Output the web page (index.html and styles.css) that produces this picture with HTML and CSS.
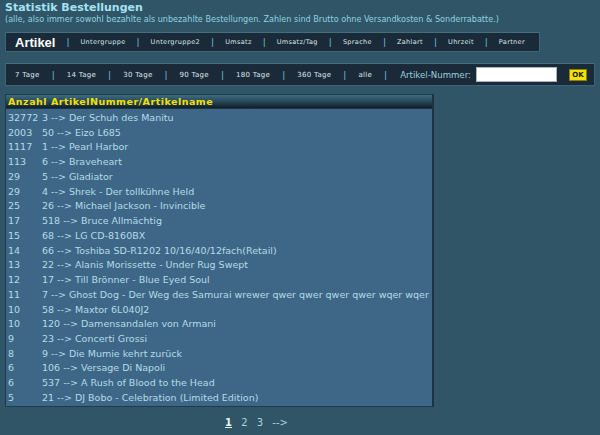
FILE: index.html
```html
<!DOCTYPE html>
<html lang="de">
<head>
    <meta charset="UTF-8">
    <title>Statistik Bestellungen</title>
    <link rel="stylesheet" href="styles.css">
</head>
<body>

    <div class="kopf">
        <h1>Statistik Bestellungen</h1>
        <p>(alle, also immer sowohl bezahlte als unbezahlte Bestellungen. Zahlen sind Brutto ohne Versandkosten &amp; Sonderrabatte.)</p>
    </div>

    <div class="menu menu-haupt">
        <a class="aktiv" href="#">Artikel</a><span class="trenner">|</span>
        <a href="#">Untergruppe</a><span class="trenner">|</span>
        <a href="#">Untergruppe2</a><span class="trenner">|</span>
        <a href="#">Umsatz</a><span class="trenner">|</span>
        <a href="#">Umsatz/Tag</a><span class="trenner">|</span>
        <a href="#">Sprache</a><span class="trenner">|</span>
        <a href="#">Zahlart</a><span class="trenner">|</span>
        <a href="#">Uhrzeit</a><span class="trenner">|</span>
        <a href="#">Partner</a>
    </div>

    <div class="menu menu-zeit">
        <a href="#">7 Tage</a><span class="trenner">|</span>
        <a href="#">14 Tage</a><span class="trenner">|</span>
        <a href="#">30 Tage</a><span class="trenner">|</span>
        <a href="#">90 Tage</a><span class="trenner">|</span>
        <a href="#">180 Tage</a><span class="trenner">|</span>
        <a href="#">360 Tage</a><span class="trenner">|</span>
        <a href="#">alle</a><span class="trenner">|</span>
        <label for="artnr">Artikel-Nummer:</label>
        <input type="text" id="artnr">
        <button type="button">OK</button>
    </div>

    <div class="tabelle">
        <div class="tabelle-kopf">Anzahl ArtikelNummer/Artikelname</div>
        <div class="tabelle-inhalt">
            <div class="zeile"><span class="spalte-anzahl">32772</span><span>3 --&gt; Der Schuh des Manitu</span></div>
            <div class="zeile"><span class="spalte-anzahl">2003</span><span>50 --&gt; Eizo L685</span></div>
            <div class="zeile"><span class="spalte-anzahl">1117</span><span>1 --&gt; Pearl Harbor</span></div>
            <div class="zeile"><span class="spalte-anzahl">113</span><span>6 --&gt; Braveheart</span></div>
            <div class="zeile"><span class="spalte-anzahl">29</span><span>5 --&gt; Gladiator</span></div>
            <div class="zeile"><span class="spalte-anzahl">29</span><span>4 --&gt; Shrek - Der tollkühne Held</span></div>
            <div class="zeile"><span class="spalte-anzahl">25</span><span>26 --&gt; Michael Jackson - Invincible</span></div>
            <div class="zeile"><span class="spalte-anzahl">17</span><span>518 --&gt; Bruce Allmächtig</span></div>
            <div class="zeile"><span class="spalte-anzahl">15</span><span>68 --&gt; LG CD-8160BX</span></div>
            <div class="zeile"><span class="spalte-anzahl">14</span><span>66 --&gt; Toshiba SD-R1202 10/16/40/12fach(Retail)</span></div>
            <div class="zeile"><span class="spalte-anzahl">13</span><span>22 --&gt; Alanis Morissette - Under Rug Swept</span></div>
            <div class="zeile"><span class="spalte-anzahl">12</span><span>17 --&gt; Till Brönner - Blue Eyed Soul</span></div>
            <div class="zeile"><span class="spalte-anzahl">11</span><span>7 --&gt; Ghost Dog - Der Weg des Samurai wrewer qwer qwer qwer qwer wqer wqer</span></div>
            <div class="zeile"><span class="spalte-anzahl">10</span><span>58 --&gt; Maxtor 6L040J2</span></div>
            <div class="zeile"><span class="spalte-anzahl">10</span><span>120 --&gt; Damensandalen von Armani</span></div>
            <div class="zeile"><span class="spalte-anzahl">9</span><span>23 --&gt; Concerti Grossi</span></div>
            <div class="zeile"><span class="spalte-anzahl">8</span><span>9 --&gt; Die Mumie kehrt zurück</span></div>
            <div class="zeile"><span class="spalte-anzahl">6</span><span>106 --&gt; Versage Di Napoli</span></div>
            <div class="zeile"><span class="spalte-anzahl">6</span><span>537 --&gt; A Rush of Blood to the Head</span></div>
            <div class="zeile"><span class="spalte-anzahl">5</span><span>21 --&gt; DJ Bobo - Celebration (Limited Edition)</span></div>
        </div>
    </div>

    <div class="seiten">
        <a class="aktuell" href="#">1</a>
        <a href="#">2</a>
        <a href="#">3</a>
        <a href="#">--&gt;</a>
    </div>

</body>
</html>
```

FILE: styles.css
```css
/* Grundlayout */
* {
    margin: 0;
    padding: 0;
    box-sizing: border-box;
}

body {
    font-family: 'DejaVu Sans', Verdana, sans-serif;
    background-color: #2f5566;
    color: #a8d8e8;
    padding: 2px 5px;
    width: 600px;
}

a {
    text-decoration: none;
}

.kopf h1 {
    font-size: 11px;
    font-weight: bold;
    color: #a6e2f2;
    line-height: 12px;
}

.kopf p {
    font-size: 8.1px;
    color: #8fd2e2;
    line-height: 10px;
}

/* Menüleisten */
.menu {
    display: flex;
    align-items: center;
    white-space: nowrap;
    background-color: #1a2a39;
    border: 1px solid #3c6678;
    border-top-color: #436f80;
}

.menu a {
    color: #dde6ea;
    font-size: 6.5px;
    letter-spacing: 0.35px;
}

.trenner {
    color: #6fc0d6;
    font-size: 9px;
    margin: 0 11px;
}

.menu-haupt {
    width: 535px;
    height: 20px;
    margin-top: 8px;
    padding-left: 9px;
}

.menu-haupt a.aktiv {
    font-family: 'Liberation Sans', Arial, sans-serif;
    font-size: 13px;
    font-weight: bold;
    letter-spacing: 0;
    color: #ffffff;
}

.menu-zeit {
    width: 590px;
    height: 23px;
    margin-top: 11px;
    padding-left: 9px;
}

.menu-zeit a {
    font-size: 7px;
    letter-spacing: 0.3px;
}

.menu-zeit .trenner {
    margin: 0 12px;
}

.menu-zeit label {
    font-size: 8.6px;
    color: #9ccedd;
    margin-left: 1px;
}

.menu-zeit input {
    width: 81px;
    height: 15px;
    margin-left: 5px;
    border: 1px solid #aab4b8;
    background-color: #ffffff;
}

.menu-zeit button {
    margin-left: 12px;
    width: 18px;
    height: 12px;
    background-color: #f2e200;
    border: 1px solid #8a8200;
    font-family: 'DejaVu Sans', sans-serif;
    font-size: 7px;
    font-weight: bold;
    color: #1a1a00;
    line-height: 10px;
}

/* Tabelle */
.tabelle {
    width: 429px;
    margin-top: 8px;
    border: 1px solid #1f3a4a;
    border-right: 2px solid #1c3442;
}

.tabelle-kopf {
    height: 13px;
    padding-left: 2px;
    background: linear-gradient(#3e6a80, #2a4c5e 45%, #0f1e2a);
    color: #f2e000;
    font-size: 9.5px;
    font-weight: bold;
    letter-spacing: 0.5px;
    line-height: 14px;
    white-space: nowrap;
}

.tabelle-inhalt {
    background-color: #3e6787;
    padding: 2px 0 0 2px;
    border-top: 1px solid #1c3444;
}

.zeile {
    display: flex;
    font-size: 9.5px;
    line-height: 14.74px;
    color: #b4dbe8;
    white-space: nowrap;
}

.zeile .spalte-anzahl {
    width: 34px;
}

/* Seitennavigation */
.seiten {
    margin-top: 10px;
    padding-left: 220px;
    font-size: 10px;
}

.seiten a {
    color: #a8d4e4;
    margin-right: 6px;
}

.seiten a.aktuell {
    color: #e6f2f6;
    font-weight: bold;
    text-decoration: underline;
}
```
